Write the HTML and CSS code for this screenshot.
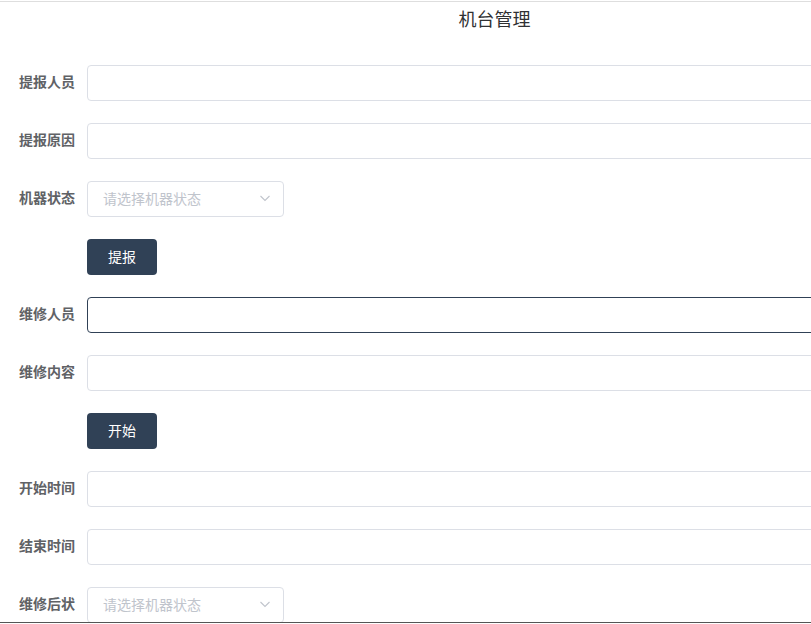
FILE: index.html
```html
<!DOCTYPE html>
<html lang="zh-CN">
<head>
<meta charset="utf-8">
<title>机台管理</title>
<link rel="stylesheet" href="styles.css">
</head>
<body>
<div class="page">
  <div class="title">机台管理</div>
  <form class="form">
    <div class="item"><label class="label">提报人员</label><div class="control"><input class="input" type="text"></div></div>
    <div class="item"><label class="label">提报原因</label><div class="control"><input class="input" type="text"></div></div>
    <div class="item"><label class="label">机器状态</label><div class="control">
      <div class="select"><span class="placeholder">请选择机器状态</span>
        <svg class="arrow" width="12" height="12" viewBox="0 0 12 12"><path d="M1.5 4 L6 8.5 L10.5 4" fill="none" stroke="#c0c4cc" stroke-width="1.1"/></svg>
      </div></div></div>
    <div class="item"><span class="label"></span><div class="control"><button type="button" class="btn">提报</button></div></div>
    <div class="item"><label class="label">维修人员</label><div class="control"><input class="input focused" type="text"></div></div>
    <div class="item"><label class="label">维修内容</label><div class="control"><input class="input" type="text"></div></div>
    <div class="item"><span class="label"></span><div class="control"><button type="button" class="btn">开始</button></div></div>
    <div class="item"><label class="label">开始时间</label><div class="control"><input class="input" type="text"></div></div>
    <div class="item"><label class="label">结束时间</label><div class="control"><input class="input" type="text"></div></div>
    <div class="item"><label class="label">维修后状</label><div class="control">
      <div class="select"><span class="placeholder">请选择机器状态</span>
        <svg class="arrow" width="12" height="12" viewBox="0 0 12 12"><path d="M1.5 4 L6 8.5 L10.5 4" fill="none" stroke="#c0c4cc" stroke-width="1.1"/></svg>
      </div></div></div>
  </form>
</div>
<div class="edge"></div>
</body>
</html>
```
FILE: styles.css
```css
html, body {
  margin: 0;
  padding: 0;
  background: #fff;
  overflow: hidden;
  font-family: "Noto Sans CJK SC", "Noto Sans", sans-serif;
}
.page {
  width: 989px;
  margin-top: 1px;
  border-top: 1px solid #dedede;
}
.title {
  text-align: center;
  font-size: 18px;
  color: #303133;
  line-height: 24px;
  padding-top: 4px;
  height: 27px;
}
.form {
  margin-top: 32px;
  display: flex;
  flex-direction: column;
  gap: 22px;
}
.item {
  display: flex;
  align-items: center;
  height: 36px;
}
.label {
  width: 87px;
  padding-right: 12px;
  padding-bottom: 3px;
  box-sizing: border-box;
  text-align: right;
  font-size: 14px;
  font-weight: 700;
  color: #606266;
  line-height: 33px;
  flex: none;
}
.control {
  flex: 1;
  display: flex;
}
.input {
  flex: 1;
  height: 36px;
  box-sizing: border-box;
  border: 1px solid #dcdfe6;
  border-radius: 4px;
  padding: 0 15px;
  font-size: 14px;
  outline: none;
  margin: 0;
}
.input.focused {
  border-color: #304156;
}
.select {
  width: 197px;
  height: 36px;
  box-sizing: border-box;
  border: 1px solid #dcdfe6;
  border-radius: 4px;
  display: flex;
  align-items: center;
  justify-content: space-between;
  padding: 0 12px 2px 15px;
}
.placeholder {
  color: #c0c4cc;
  font-size: 14px;
}
.btn {
  width: 70px;
  height: 36px;
  border: none;
  border-radius: 4px;
  background: #304156;
  color: #fff;
  font-size: 14px;
  font-family: inherit;
  padding: 0 0 2px;
}
.edge {
  position: fixed;
  left: 0;
  right: 0;
  bottom: 1px;
  height: 1px;
  background: #555;
}
```
